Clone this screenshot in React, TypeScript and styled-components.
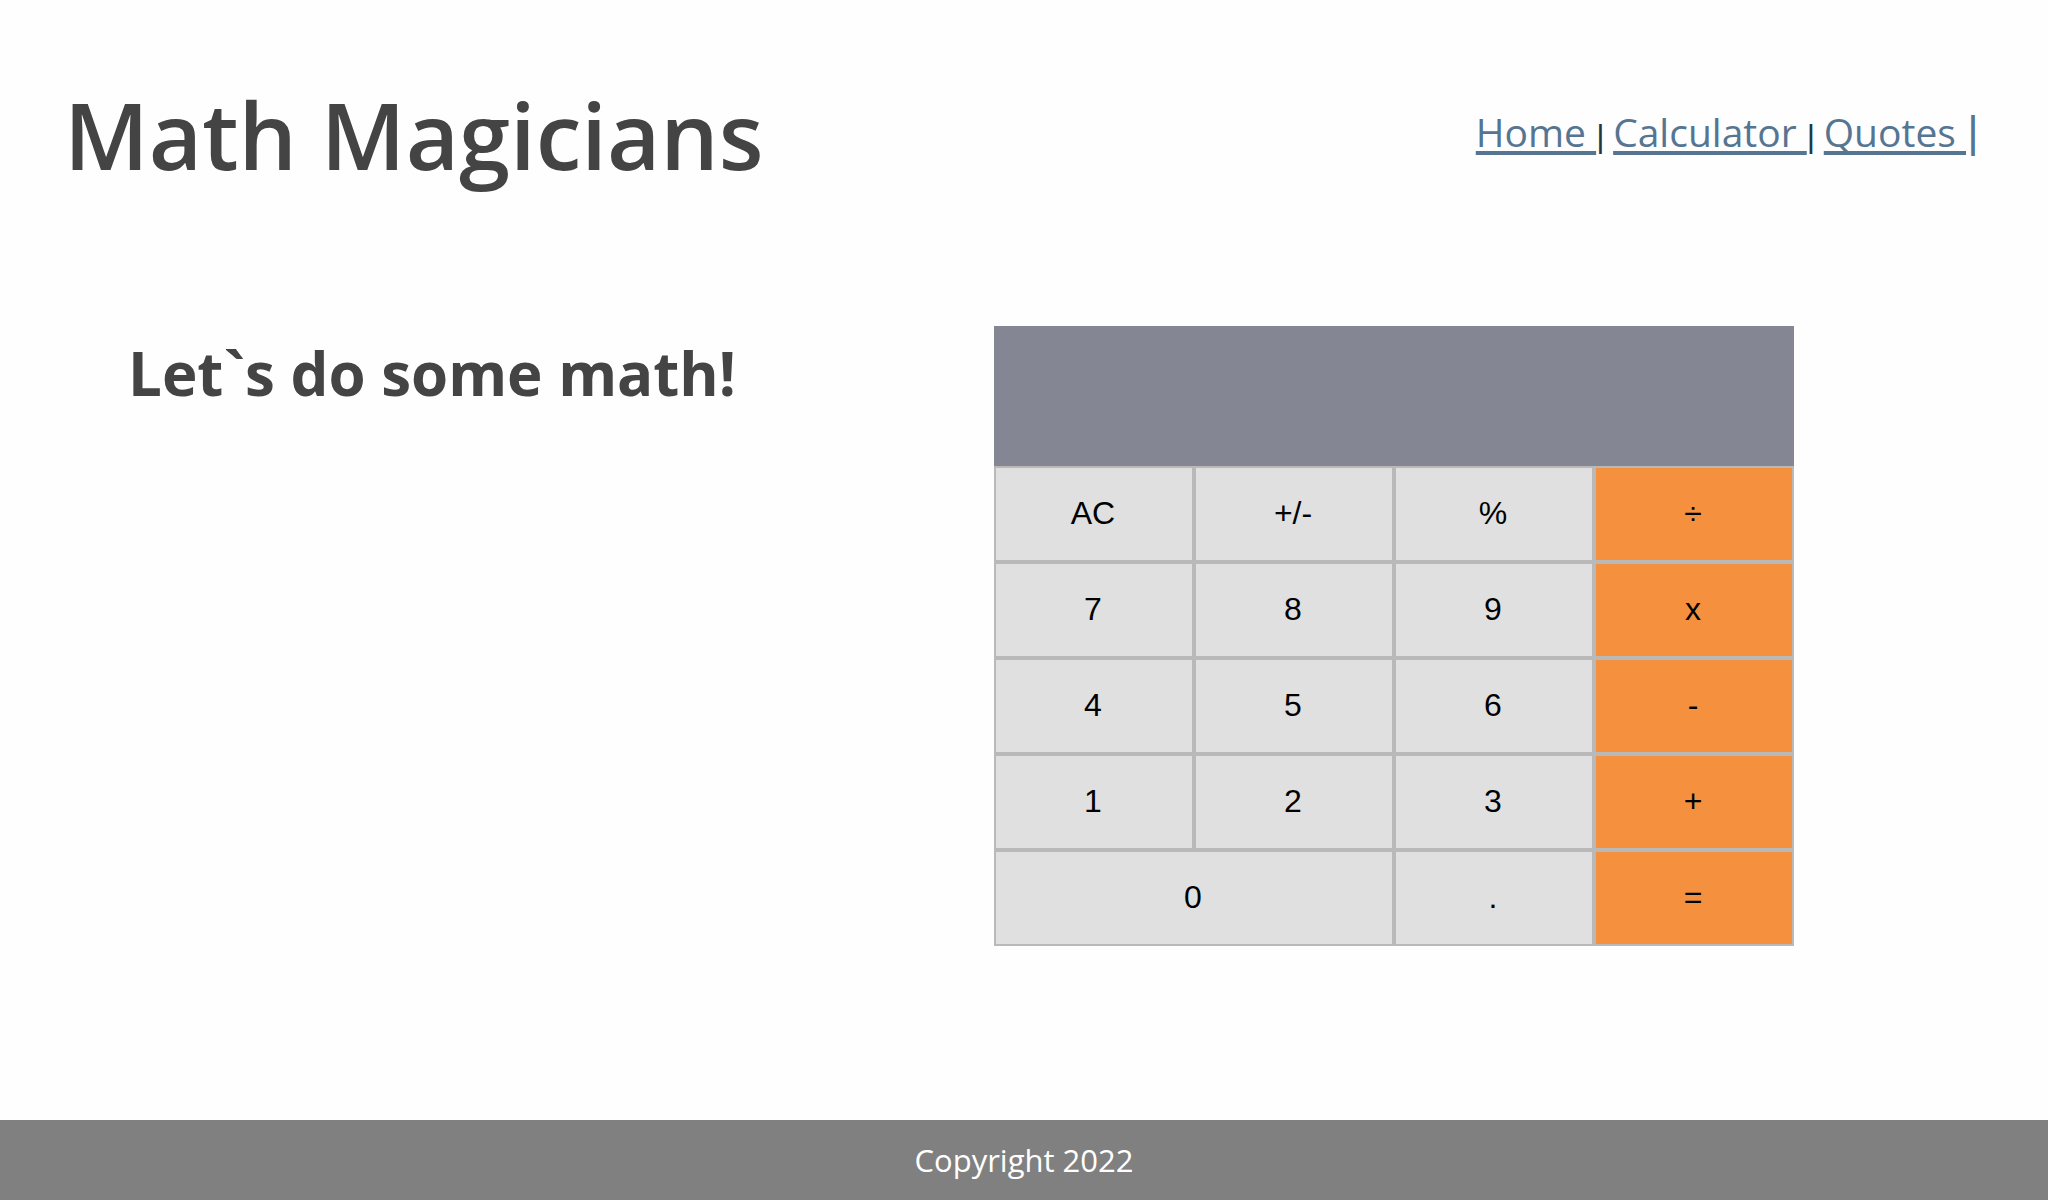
import React from 'react';
import styled, { createGlobalStyle } from 'styled-components';

const GlobalStyle = createGlobalStyle`
  * {
    box-sizing: border-box;
  }

  body {
    margin: 0;
    background: #fefefe;
    color: #444;
    font-family: 'Segoe UI', 'Open Sans', sans-serif;
  }
`;

const Page = styled.div`
  display: flex;
  flex-direction: column;
  min-height: 100vh;
`;

const Header = styled.header`
  display: flex;
  justify-content: space-between;
  align-items: flex-start;
  padding: 70px 68px 0 64px;
`;

const Title = styled.h1`
  margin: 0;
  font-size: 92px;
  font-weight: 600;
  line-height: 130px;
`;

const Nav = styled.nav`
  display: flex;
  align-items: baseline;
  padding-top: 32px;
  line-height: 60px;
`;

const NavLink = styled.a`
  color: #557592;
  font-size: 39px;
  font-weight: 400;
  text-decoration: underline;
  text-decoration-thickness: 4px;
  text-underline-offset: 4px;
  text-decoration-skip-ink: none;
  white-space: pre;
`;

const Divider = styled.span`
  width: 8px;
  margin-right: 9px;
  color: #213547;
  font-family: 'Liberation Sans', Arial, sans-serif;
  font-size: 32px;
  text-align: center;
`;

const EndDivider = styled(Divider)`
  width: 14px;
  margin-right: 0;
  color: #557592;
  font-size: 44px;
`;

const Main = styled.main`
  display: flex;
  flex: 1;
  justify-content: space-between;
  align-items: flex-start;
  padding: 126px 254px 64px 128px;
`;

const Heading = styled.h2`
  margin: 0;
  font-size: 60px;
  font-weight: 700;
  line-height: 94px;
`;

const Calculator = styled.section`
  display: grid;
  grid-template-rows: 140px auto;
  width: 800px;
`;

const Display = styled.output`
  background: #858693;
`;

const Keypad = styled.div`
  display: grid;
  grid-template-columns: repeat(4, 1fr);
  grid-auto-rows: 96px;
`;

const Key = styled.button<{ $operator?: boolean; $wide?: boolean }>`
  grid-column: span ${({ $wide }) => ($wide ? 2 : 1)};
  padding: 0 2px 2px 0;
  border: 2px solid #b9b9b9;
  background: ${({ $operator }) => ($operator ? '#f5913e' : '#e0e0e0')};
  color: #000;
  font-family: Arial, 'Liberation Sans', sans-serif;
  font-size: 32px;
  cursor: pointer;
`;

const Footer = styled.footer`
  height: 80px;
  background: #808080;
  color: #fff;
  font-size: 31px;
  line-height: 80px;
  text-align: center;
`;

const keys = [
  'AC', '+/-', '%', '÷',
  '7', '8', '9', 'x',
  '4', '5', '6', '-',
  '1', '2', '3', '+',
  '0', '.', '=',
];

const operators = ['÷', 'x', '-', '+', '='];

export default function App() {
  return (
    <Page>
      <GlobalStyle />
      <Header>
        <Title>Math Magicians</Title>
        <Nav>
          <NavLink href="#home">Home </NavLink>
          <Divider>|</Divider>
          <NavLink href="#calculator">Calculator </NavLink>
          <Divider>|</Divider>
          <NavLink href="#quotes">Quotes </NavLink>
          <EndDivider>|</EndDivider>
        </Nav>
      </Header>
      <Main>
        <Heading>Let`s do some math!</Heading>
        <Calculator>
          <Display />
          <Keypad>
            {keys.map((key) => (
              <Key key={key} type="button" $operator={operators.includes(key)} $wide={key === '0'}>
                {key}
              </Key>
            ))}
          </Keypad>
        </Calculator>
      </Main>
      <Footer>Copyright 2022</Footer>
    </Page>
  );
}
